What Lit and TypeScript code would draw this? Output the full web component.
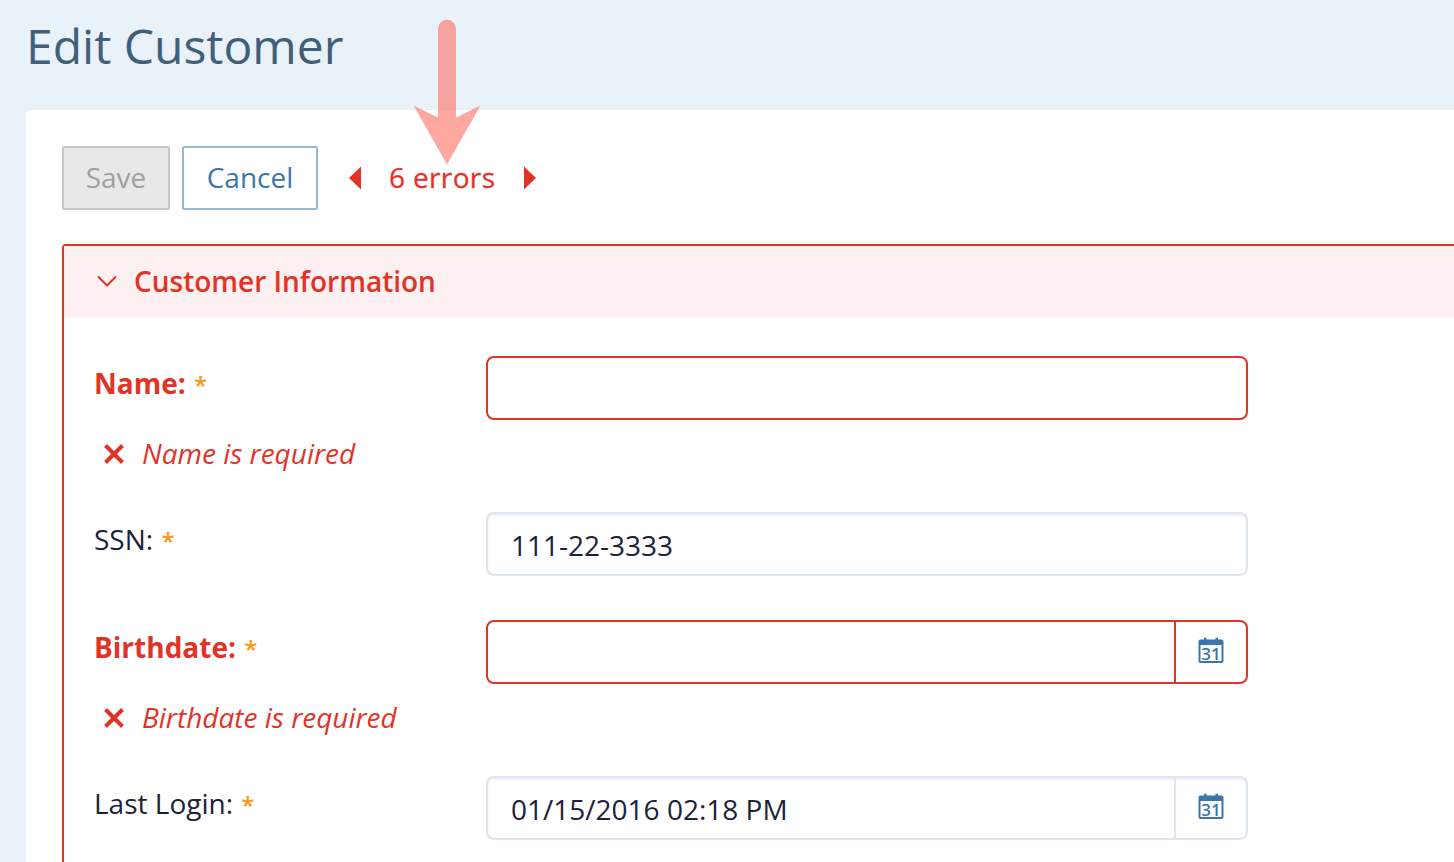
import { LitElement, html, css } from "lit";
import { customElement } from "lit/decorators.js";

const calendar = html`<svg class="cal" width="28" height="28" viewBox="0 0 28 28">
  <path fill="#3a76ab" d="M3.500 2.500h3.500V.8h2.500v1.700h9V.8h2.500v1.700h3.500a2 2 0 0 1 2 2v19.500a2 2 0 0 1-2 2h-21a2 2 0 0 1-2-2v-19.500a2 2 0 0 1 2-2z"/>
  <rect x="3.500" y="8" width="21" height="16" fill="#fff"/>
  <text x="14" y="22.500" text-anchor="middle" class="caltext">31</text>
</svg>`;

@customElement("app-root")
export class AppRoot extends LitElement {
  static styles = css`
    :host { display: block; height: 862px; overflow: hidden; background: #e9f1f9; font-family: "Open Sans", sans-serif; color: #1c2238; position: relative; }
    h1 { margin: 0; height: 110px; box-sizing: border-box; padding: 13px 0 0 26px; font-size: 48px; line-height: 65px; font-weight: 400; color: #3f6078; }
    .card { margin: 0 -40px 0 26px; background: #fff; border-radius: 6px 6px 0 0; padding: 36px 36px 0; height: 752px; box-sizing: border-box; }
    .toolbar { display: flex; align-items: center; height: 64px; font-size: 28px; }
    .btn { box-sizing: border-box; height: 64px; display: flex; align-items: center; justify-content: center; border-radius: 2px; padding-bottom: 2px; }
    .save { width: 108px; background: #e8e8e8; border: 2px solid #c8c8c8; color: #a0a0a0; }
    .cancel { width: 136px; margin-left: 12px; background: #fff; border: 2px solid #96b8d6; color: #3a76ab; }
    .pager { display: flex; align-items: center; color: #e23327; margin-left: 30px; }
    .pager svg { display: block; }
    .pager span { margin: 0 27.500px 2px 27px; letter-spacing: .35px; -webkit-text-stroke: .3px #e23327; }
    .section { border: 2px solid #e23327; border-bottom: 0; border-radius: 4px 0 0 0; margin-top: 34px; height: 700px; }
    .head { height: 72px; background: #fdf0f0; display: flex; align-items: center; padding-left: 30px; gap: 14px; color: #e23327; font-size: 28px; font-weight: 600; }
    .head span { margin-bottom: 2px; }
    .form { padding: 38px 0 0 30px; display: flex; flex-direction: column; }
    .row { display: grid; grid-template-columns: 392px 762px; height: 64px; }
    .label { font-size: 28px; line-height: 55px; height: 56px; }
    .label.err { color: #e23327; font-weight: 700; }
    .star { color: #fb9516; font-size: 24px; font-weight: 600; margin-left: 1px; }
    .input { box-sizing: border-box; height: 64px; border: 2px solid #dde6ef; border-radius: 8px; box-shadow: inset 0 2px 2px #eef1f4; display: flex; align-items: center; padding-left: 23px; padding-top: 2px; font-size: 28px; color: #1c2238; background: #fff; }
    .input.err { border-color: #e23327; box-shadow: none; }
    .date { padding: 0; }
    .date .val { flex: 1; padding-left: 23px; padding-top: 2px; }
    .date .btnc { width: 72px; height: 100%; display: flex; align-items: center; justify-content: center; border-left: 2px solid #dde6ef; box-sizing: border-box; padding-bottom: 3px; }
    .date.err .btnc { border-left-color: #e23327; }
    .cal { display: block; }
    .caltext { font: 600 17px "Open Sans", sans-serif; fill: #3a76ab; }
    .error { height: 92px; box-sizing: border-box; display: flex; align-items: center; gap: 16px; padding: 5px 0 30px 8px; color: #e23327; font-style: italic; font-size: 28px; }
    .error span { margin-bottom: 2px; }
    .gap { height: 44px; }
    .arrow { position: absolute; left: 413px; top: 19px; }
  `;

  private x() {
    return html`<svg width="24" height="24" viewBox="0 0 24 24"><path d="M3.500 3.500l17 17M20.500 3.500l-17 17" stroke="#e23327" stroke-width="4" fill="none"/></svg>`;
  }

  render() {
    return html`
      <h1>Edit Customer</h1>
      <div class="card">
        <div class="toolbar">
          <div class="btn save">Save</div>
          <div class="btn cancel">Cancel</div>
          <div class="pager">
            <svg width="14" height="24" viewBox="0 0 14 24"><path d="M13 .5v23L1 12z" fill="#e23327"/></svg>
            <span>6 errors</span>
            <svg width="14" height="24" viewBox="0 0 14 24"><path d="M1 .5v23l12-11.500z" fill="#e23327"/></svg>
          </div>
        </div>
        <div class="section">
          <div class="head">
            <svg width="26" height="16" viewBox="0 0 26 16"><path d="M4 2.500l9 9 9-9" stroke="#e23327" stroke-width="2" fill="none"/></svg>
            <span>Customer Information</span>
          </div>
          <div class="form">
            <div class="row">
              <div class="label err">Name: <span class="star">*</span></div>
              <div class="input err"></div>
            </div>
            <div class="error">${this.x()}<span>Name is required</span></div>
            <div class="row">
              <div class="label">SSN: <span class="star">*</span></div>
              <div class="input">111-22-3333</div>
            </div>
            <div class="gap"></div>
            <div class="row">
              <div class="label err">Birthdate: <span class="star">*</span></div>
              <div class="input date err"><div class="val"></div><div class="btnc">${calendar}</div></div>
            </div>
            <div class="error">${this.x()}<span>Birthdate is required</span></div>
            <div class="row">
              <div class="label">Last Login: <span class="star">*</span></div>
              <div class="input date"><div class="val">01/15/2016 02:18 PM</div><div class="btnc">${calendar}</div></div>
            </div>
          </div>
        </div>
      </div>
      <svg class="arrow" width="68" height="146" viewBox="0 0 68 146">
        <path d="M33.500 .5a9.500 9.500 0 0 1 9.500 9.500v88.500l24.500-12-33.500 59-33.500-59 24.500 12V10a9.500 9.500 0 0 1 9.500-9.500z" fill="#ff6e61" fill-opacity=".6"/>
      </svg>
    `;
  }
}
